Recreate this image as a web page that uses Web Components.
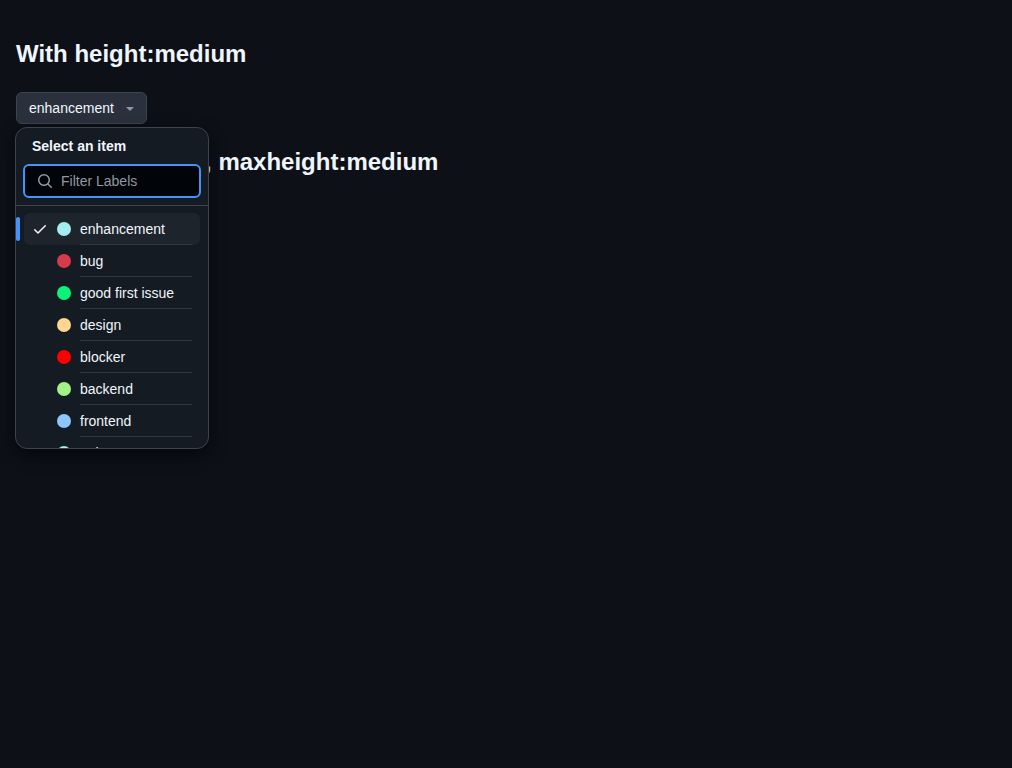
<!DOCTYPE html>
<html lang="en">
<head>
<meta charset="utf-8">
<meta name="viewport" content="width=device-width, initial-scale=1">
<title>Select panel</title>
<style>
html { background: #0d1117; color-scheme: dark; }
body { box-sizing: border-box; min-height: 100vh; margin: 0; padding: 16px; background: #0d1117; color: #f0f6fc; font: 14px/20px "Liberation Sans", Arial, sans-serif; }
</style>
</head>
<body>
<story-page></story-page>
<script>
const define = (name, html, setup) => {
  const template = document.createElement('template');
  template.innerHTML = html;
  customElements.define(name, class extends HTMLElement {
    constructor() {
      super();
      this.attachShadow({ mode: 'open' }).append(template.content.cloneNode(true));
    }
    connectedCallback() { if (setup) setup(this, this.shadowRoot); }
  });
};

define('story-heading', `
<style>
:host { display: block; }
h2 { margin: 0; font-size: 24px; line-height: 28px; font-weight: 700; }
</style>
<h2><slot></slot></h2>`);

define('panel-anchor', `
<style>
:host { display: inline-block; vertical-align: top; }
button { display: flex; align-items: center; gap: 8px; height: 32px; padding: 0 8px 0 12px; font: inherit; color: #f0f6fc; background: #2a313c; border: 1px solid #3d444d; border-radius: 6px; }
svg { display: block; fill: #9198a1; }
</style>
<button type="button" aria-haspopup="true" aria-expanded="true"><slot></slot>
<svg width="16" height="16" viewBox="0 0 16 16" aria-hidden="true"><path d="m4.427 7.427 3.396 3.396a.25.25 0 0 0 .354 0l3.396-3.396A.25.25 0 0 0 11.396 7H4.604a.25.25 0 0 0-.177.427Z"/></svg></button>`);

define('filter-field', `
<style>
:host { display: block; }
label { display: flex; align-items: center; gap: 8px; height: 30px; padding: 0 12px; background: #010409; border: 2px solid #4493f8; border-radius: 6px; }
svg { flex: none; fill: #9198a1; }
input { flex: 1; min-width: 0; margin: 0; padding: 0; border: 0; outline: 0; background: none; color: inherit; font: inherit; }
input::placeholder { color: #9198a1; opacity: 1; }
</style>
<label>
<svg width="16" height="16" viewBox="0 0 16 16" aria-hidden="true"><path d="M10.68 11.74a6 6 0 0 1-7.922-8.982 6 6 0 0 1 8.982 7.922l3.04 3.04a.749.749 0 0 1-.326 1.275.749.749 0 0 1-.734-.215ZM11.5 7a4.499 4.499 0 1 0-8.997 0A4.499 4.499 0 0 0 11.5 7Z"/></svg>
<input type="text" placeholder="Filter Labels" aria-label="Filter Labels">
</label>`);

define('label-option', `
<style>
:host { display: flex; position: relative; gap: 8px; height: 32px; padding: 0 8px; border-radius: 6px; }
:host([selected]) { background: #1e242b; }
:host([selected])::before { content: ""; position: absolute; left: -8px; top: 4px; width: 4px; height: 24px; border-radius: 6px; background: #4493f8; }
.visual { flex: none; display: grid; place-items: center; width: 16px; height: 32px; }
svg { display: none; fill: #f0f6fc; }
:host([selected]) svg { display: block; }
.dot { width: 14px; height: 14px; border-radius: 50%; background: var(--dot); }
.text { flex: 1; box-sizing: border-box; height: 32px; padding-top: 6px; border-bottom: 1px solid #2f3742; }
</style>
<span class="visual"><svg width="16" height="16" viewBox="0 0 16 16" aria-hidden="true"><path d="M13.78 4.22a.75.75 0 0 1 0 1.06l-7.25 7.25a.75.75 0 0 1-1.06 0L2.22 9.28a.751.751 0 0 1 .018-1.042.751.751 0 0 1 1.042-.018L6 10.94l6.72-6.72a.75.75 0 0 1 1.06 0Z"/></svg></span>
<span class="visual"><span class="dot"></span></span>
<span class="text"><slot></slot></span>`, (host, root) => {
  root.querySelector('.dot').style.setProperty('--dot', host.getAttribute('color'));
  host.setAttribute('role', 'option');
  host.setAttribute('aria-selected', host.hasAttribute('selected'));
});

define('select-panel', `
<style>
:host { display: flex; flex-direction: column; box-sizing: border-box; width: 194px; height: 322px; overflow: hidden; background: #151b23; border: 1px solid #3d444d; border-radius: 12px; box-shadow: 0 6px 12px -3px #01040966, 0 6px 18px 0 #01040966; }
header { padding: 8px 7px 7px; border-bottom: 1px solid #3d444d; }
h1 { margin: 0 0 8px; padding: 0 9px; font-size: 14px; line-height: 20px; font-weight: 700; }
.list { flex: 1; min-height: 0; overflow: hidden; padding: 7px 8px; }
</style>
<header><h1><slot name="title"></slot></h1><filter-field></filter-field></header>
<div class="list" role="listbox" aria-label="Labels"><slot></slot></div>`);

define('story-page', `
<style>
:host { display: block; padding-top: 24px; }
.story { position: relative; }
.story panel-anchor { margin: 24px 0; }
select-panel { position: absolute; left: -1px; top: calc(100% - 21px); z-index: 1; }
</style>
<main>
<section class="story">
<story-heading>With height:medium</story-heading>
<panel-anchor>enhancement</panel-anchor>
<select-panel>
<span slot="title">Select an item</span>
<label-option color="#a2eeef" selected>enhancement</label-option>
<label-option color="#d73a4a">bug</label-option>
<label-option color="#0cf478">good first issue</label-option>
<label-option color="#ffd78e">design</label-option>
<label-option color="#ff0000">blocker</label-option>
<label-option color="#a4f287">backend</label-option>
<label-option color="#8dc6fc">frontend</label-option>
<label-option color="#a2eeef">epic</label-option>
</select-panel>
</section>
<section><story-heading>With height:auto, maxheight:medium</story-heading></section>
</main>`);
</script>
</body>
</html>
